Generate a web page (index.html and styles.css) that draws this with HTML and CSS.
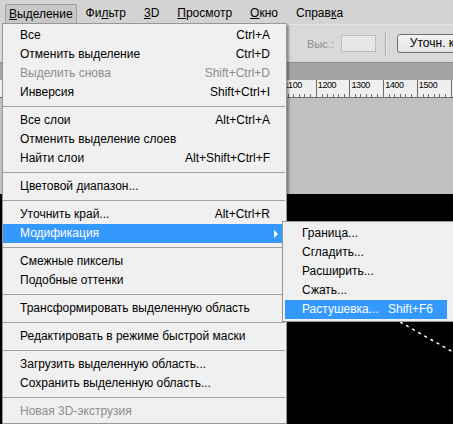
FILE: index.html
```html
<!DOCTYPE html>
<html lang="ru">
<head>
<meta charset="utf-8">
<title>Выделение</title>
<link rel="stylesheet" href="styles.css">
</head>
<body>
<div class="app">
  <div class="menubar">
    <span class="mb active"><u>В</u>ыделение</span>
    <span class="mb">Фи<u>л</u>ьтр</span>
    <span class="mb"><u>3</u>D</span>
    <span class="mb"><u>П</u>росмотр</span>
    <span class="mb"><u>О</u>кно</span>
    <span class="mb">Справ<u>к</u>а</span>
  </div>
  <div class="options">
    <span class="opt-label">Выс.:</span>
    <span class="opt-input"></span>
    <span class="opt-sep"></span>
    <span class="opt-btn">Уточн. края...</span>
  </div>
  <div class="tabbar"></div>
  <div class="ruler">
    <span class="seg"></span><span class="seg"></span><span class="seg"></span><span class="seg"></span><span class="seg"></span><span class="seg"></span><span class="seg"></span><span class="seg"></span><span class="seg">1100</span><span class="seg">1200</span><span class="seg">1300</span><span class="seg">1400</span><span class="seg">1500</span><span class="seg"></span>
  </div>
  <div class="pasteboard"></div>
  <div class="canvas">
    <svg class="ants" width="60" height="40" viewBox="0 0 60 40"><line x1="0" y1="1" x2="60" y2="35" stroke="#fff" stroke-width="1.5" stroke-dasharray="3 4"/></svg>
  </div>

  <div class="menu">
    <div class="item"><span>Все</span><span>Ctrl+A</span></div>
    <div class="item"><span>Отменить выделение</span><span>Ctrl+D</span></div>
    <div class="item disabled"><span>Выделить снова</span><span>Shift+Ctrl+D</span></div>
    <div class="item"><span>Инверсия</span><span>Shift+Ctrl+I</span></div>
    <div class="sep"></div>
    <div class="item"><span>Все слои</span><span>Alt+Ctrl+A</span></div>
    <div class="item"><span>Отменить выделение слоев</span><span></span></div>
    <div class="item"><span>Найти слои</span><span>Alt+Shift+Ctrl+F</span></div>
    <div class="sep"></div>
    <div class="item"><span>Цветовой диапазон...</span><span></span></div>
    <div class="sep"></div>
    <div class="item"><span>Уточнить край...</span><span>Alt+Ctrl+R</span></div>
    <div class="item hl"><span>Модификация</span><span class="arrow"></span></div>
    <div class="sep"></div>
    <div class="item"><span>Смежные пикселы</span><span></span></div>
    <div class="item"><span>Подобные оттенки</span><span></span></div>
    <div class="sep"></div>
    <div class="item"><span>Трансформировать выделенную область</span><span></span></div>
    <div class="sep"></div>
    <div class="item"><span>Редактировать в режиме быстрой маски</span><span></span></div>
    <div class="sep"></div>
    <div class="item"><span>Загрузить выделенную область...</span><span></span></div>
    <div class="item"><span>Сохранить выделенную область...</span><span></span></div>
    <div class="sep"></div>
    <div class="item disabled"><span>Новая 3D-экструзия</span><span></span></div>
  </div>

  <div class="submenu">
    <div class="sitem"><span>Граница...</span></div>
    <div class="sitem"><span>Сгладить...</span></div>
    <div class="sitem"><span>Расширить...</span></div>
    <div class="sitem"><span>Сжать...</span></div>
    <div class="sitem hl"><span>Растушевка...</span><span class="skey">Shift+F6</span></div>
  </div>
</div>
</body>
</html>
```

FILE: styles.css
```css
* { box-sizing: border-box; }
html, body { margin: 0; padding: 0; }
body {
  width: 453px;
  height: 424px;
  overflow: hidden;
  font-family: "Liberation Sans", Arial, sans-serif;
  font-size: 12px;
  color: #000;
  background: #000;
}
.app {
  position: relative;
  width: 453px;
  height: 424px;
  display: flex;
  flex-direction: column;
  overflow: hidden;
}
.menubar {
  height: 24px;
  flex: none;
  background: #d3d3d3;
  display: flex;
  align-items: flex-end;
}
.mb {
  flex: none;
  height: 20px;
  line-height: 19px;
  padding: 0 9px;
  white-space: nowrap;
}
.mb u { text-decoration: underline; text-underline-offset: 1px; }
.mb.active {
  margin-left: 5px;
  padding-left: 3px;
  padding-right: 3px;
  background: #c7c7c7;
  border: 1px solid #a0a0a0;
  border-bottom: none;
  border-radius: 2px 2px 0 0;
  line-height: 18px;
}
.options {
  height: 38px;
  flex: none;
  background: #d9d9d9;
  border-top: 1px solid #e4e4e4;
  display: flex;
  align-items: center;
  padding-left: 307px;
}
.options > span { flex: none; }
.opt-label { color: #909090; font-size: 11px; margin-right: 7px; }
.opt-input {
  width: 35px;
  height: 17px;
  background: #e6e6e6;
  border: 1px solid #bdbdbd;
}
.opt-sep {
  width: 2px;
  height: 22px;
  margin-left: 9px;
  margin-right: 10px;
  border-left: 1px solid #a9a9a9;
  border-right: 1px solid #ececec;
}
.opt-btn {
  height: 19px;
  line-height: 17px;
  padding: 0 8px 0 12px;
  white-space: nowrap;
  border: 1px solid #707070;
  border-radius: 3px;
  background: linear-gradient(#f4f4f4, #e2e2e2);
}
.tabbar {
  height: 18px;
  flex: none;
  background: #a4a4a4;
  border-top: 1px solid #8c8c8c;
}
.ruler {
  height: 18px;
  flex: none;
  background: #efefef;
  border-bottom: 1px solid #6c6c6c;
  display: flex;
  padding-left: 12.6px;
  overflow: hidden;
}
.seg {
  flex: none;
  width: 33.7px;
  height: 17px;
  overflow: hidden;
  border-left: 1px solid #6c6c6c;
  padding-left: 1px;
  font-size: 9px;
  letter-spacing: -0.4px;
  line-height: 11px;
  color: #000;
  background-image: repeating-linear-gradient(to right, transparent 0 4.6px, #6c6c6c 4.6px 5.6px);
  background-size: 100% 3px;
  background-position: 0 100%;
  background-repeat: no-repeat;
}
.pasteboard {
  height: 96px;
  flex: none;
  background: #c0c0c0;
}
.canvas {
  flex: 1;
  position: relative;
  background: #000;
}
.ants {
  position: absolute;
  left: 400px;
  top: 127px;
}
.menu {
  position: absolute;
  left: 2px;
  top: 23px;
  width: 285px;
  background: #f0f0f0;
  border: 1px solid #979797;
  padding: 2px 0;
  box-shadow: 2px 2px 2px rgba(0,0,0,0.35);
}
.item {
  height: 19px;
  line-height: 19px;
  margin-right: 3px;
  padding: 0 13px 0 17px;
  display: flex;
  justify-content: space-between;
  align-items: center;
  white-space: nowrap;
}
.item.disabled { color: #8d8d8d; }
.hl { background: #3399ff; color: #fff; }
.sep {
  height: 1px;
  margin: 4px 1px 4px 0;
  background: #a0a0a0;
}
.arrow {
  width: 0;
  height: 0;
  margin-right: -8px;
  border-left: 4px solid #fff;
  border-top: 4px solid transparent;
  border-bottom: 4px solid transparent;
}
.submenu {
  position: absolute;
  left: 282px;
  top: 221px;
  width: 172px;
  background: #f0f0f0;
  border: 1px solid #979797;
  padding: 2px;
}
.sitem {
  height: 19px;
  line-height: 19px;
  margin-right: 4px;
  padding: 0 14px 0 17px;
  display: flex;
  align-items: center;
  white-space: nowrap;
}
.skey { margin-left: auto; }
```
